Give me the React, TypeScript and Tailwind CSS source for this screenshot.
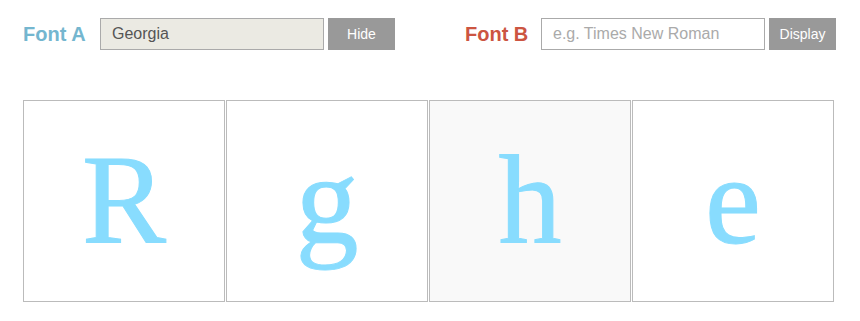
import { useState } from "react";

const letters = ["R", "g", "h", "e"];

export default function App() {
  const [fontA, setFontA] = useState("Georgia");
  const [fontB, setFontB] = useState("");

  return (
    <div className="min-h-screen bg-white font-['Liberation_Sans',Arial,sans-serif]">
      <div className="flex h-[68px] items-center px-[23px]">
        <div className="flex items-center">
          <span className="w-[77px] text-[20px] font-bold text-[#74b6cf]">Font A</span>
          <input
            value={fontA}
            onChange={(e) => setFontA(e.target.value)}
            className="h-[32px] w-[224px] border border-[#aaaaaa] bg-[#ebeae3] px-[11px] text-[16px] text-[#555555] outline-none"
          />
          <button className="ml-[4px] h-[32px] w-[67px] bg-[#999999] text-[14px] text-white">Hide</button>
        </div>
        <div className="ml-[70px] flex items-center">
          <span className="w-[76px] text-[20px] font-bold text-[#cc5541]">Font B</span>
          <input
            value={fontB}
            onChange={(e) => setFontB(e.target.value)}
            placeholder="e.g. Times New Roman"
            className="h-[32px] w-[224px] border border-[#aaaaaa] bg-white px-[11px] text-[16px] text-[#555555] outline-none placeholder:text-[#aaaaaa]"
          />
          <button className="ml-[4px] h-[32px] w-[67px] bg-[#999999] text-[14px] text-white">Display</button>
        </div>
      </div>
      <div className="mt-[32px] flex gap-[1px] px-[23px]">
        {letters.map((l, i) => (
          <div
            key={l}
            className={`flex h-[202px] w-[202px] items-center justify-center border border-[#bbbbbb] ${i === 2 ? "bg-[#f9f9f9]" : "bg-white"}`}
          >
            <span className="font-['Liberation_Serif',Georgia,serif] text-[126px] leading-none text-[#88dcfe] [-webkit-text-stroke:1px_#88dcfe]">
              {l}
            </span>
          </div>
        ))}
      </div>
    </div>
  );
}
